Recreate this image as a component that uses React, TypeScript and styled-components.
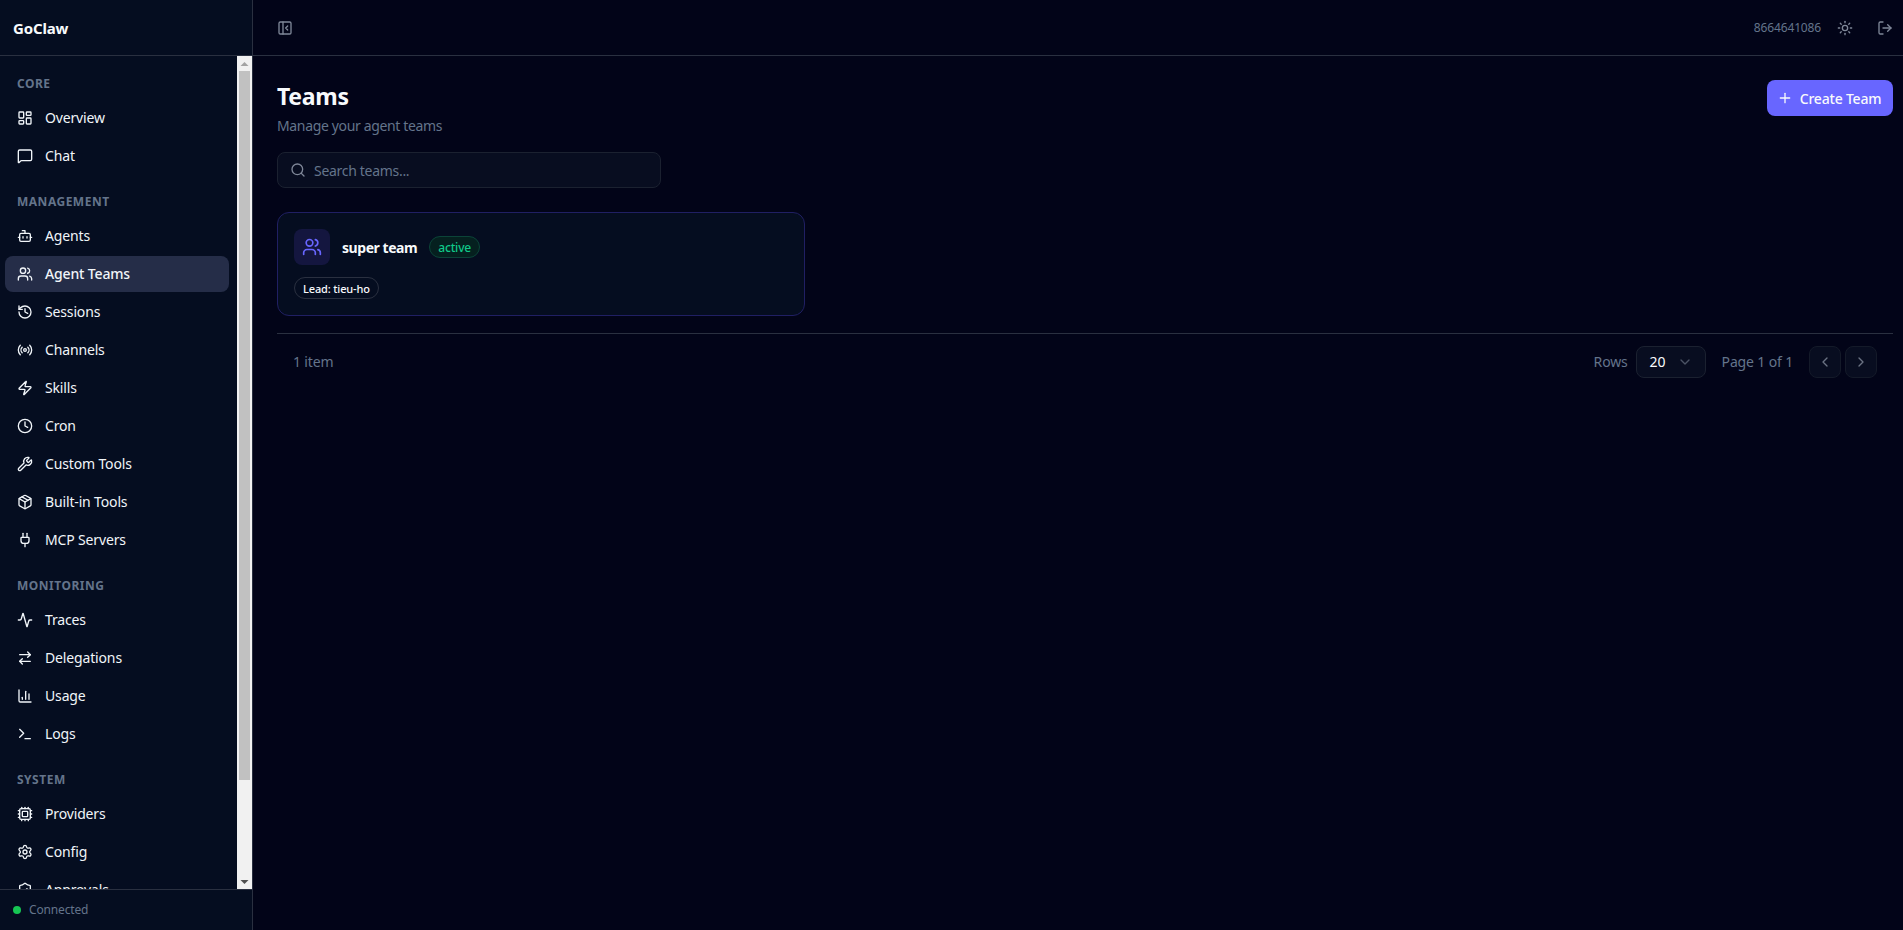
import styled, { createGlobalStyle } from "styled-components";
import {
  Activity,
  ArrowRightLeft,
  Bot,
  ChartColumn,
  ChevronDown,
  ChevronLeft,
  ChevronRight,
  Clock,
  Cpu,
  History,
  LayoutDashboard,
  LogOut,
  LucideIcon,
  MessageSquare,
  Package,
  PanelLeftClose,
  Plug,
  Plus,
  Radio,
  Search,
  Server,
  Settings,
  ShieldCheck,
  Sun,
  Terminal,
  Users,
  Volume2,
  Wrench,
  Zap,
} from "lucide-react";

const FONT = `"Noto Sans", "Open Sans", sans-serif`;

const navGroups: { title: string; items: { label: string; icon: LucideIcon; active?: boolean }[] }[] = [
  {
    title: "CORE",
    items: [
      { label: "Overview", icon: LayoutDashboard },
      { label: "Chat", icon: MessageSquare },
    ],
  },
  {
    title: "MANAGEMENT",
    items: [
      { label: "Agents", icon: Bot },
      { label: "Agent Teams", icon: Users, active: true },
      { label: "Sessions", icon: History },
      { label: "Channels", icon: Radio },
      { label: "Skills", icon: Zap },
      { label: "Cron", icon: Clock },
      { label: "Custom Tools", icon: Wrench },
      { label: "Built-in Tools", icon: Package },
      { label: "MCP Servers", icon: Plug },
    ],
  },
  {
    title: "MONITORING",
    items: [
      { label: "Traces", icon: Activity },
      { label: "Delegations", icon: ArrowRightLeft },
      { label: "Usage", icon: ChartColumn },
      { label: "Logs", icon: Terminal },
    ],
  },
  {
    title: "SYSTEM",
    items: [
      { label: "Providers", icon: Cpu },
      { label: "Config", icon: Settings },
      { label: "Approvals", icon: ShieldCheck },
      { label: "Nodes", icon: Server },
      { label: "TTS", icon: Volume2 },
    ],
  },
];

const GlobalStyle = createGlobalStyle`
  html, body {
    margin: 0;
    height: 100%;
    background: #020418;
    overflow: hidden;
  }
  * {
    box-sizing: border-box;
  }
`;

const Shell = styled.div`
  display: flex;
  height: 930px;
  font-family: ${FONT};
  letter-spacing: -0.15px;
  color: #f8fafc;
`;

const Sidebar = styled.aside`
  width: 253px;
  flex-shrink: 0;
  display: flex;
  flex-direction: column;
  background: #050d20;
  border-right: 1px solid #2a3040;
`;

const Brand = styled.div`
  height: 56px;
  flex-shrink: 0;
  display: flex;
  align-items: center;
  padding-left: 13px;
  font-size: 15px;
  font-weight: 700;
  border-bottom: 1px solid #2a3040;
`;

const NavArea = styled.div`
  flex: 1;
  min-height: 0;
  display: flex;
`;

const NavScroll = styled.nav`
  flex: 1;
  min-width: 0;
  overflow: hidden;
  padding: 16px 8px 15px 5px;
  display: flex;
  flex-direction: column;
  gap: 16px;
`;

const ScrollTrack = styled.div`
  width: 15px;
  flex-shrink: 0;
  display: flex;
  flex-direction: column;
  background: #f1f1f1;
`;

const ScrollArrow = styled.svg`
  width: 15px;
  height: 15px;
  flex-shrink: 0;
`;

const ScrollRail = styled.div`
  flex: 1;
  padding: 0 2px;
`;

const ScrollThumb = styled.div`
  height: 709px;
  background: #c1c1c1;
`;

const NavGroup = styled.div`
  display: flex;
  flex-direction: column;
  flex-shrink: 0;
`;

const GroupTitle = styled.div`
  height: 28px;
  padding-left: 12px;
  line-height: 24px;
  font-size: 12px;
  font-weight: 700;
  letter-spacing: 0.5px;
  color: #64748b;
`;

const NavList = styled.div`
  display: flex;
  flex-direction: column;
  gap: 2px;
`;

const NavItem = styled.a<{ $active?: boolean }>`
  height: 36px;
  flex-shrink: 0;
  display: flex;
  align-items: center;
  gap: 12px;
  padding-left: 12px;
  border-radius: 8px;
  font-size: 14px;
  font-weight: ${(props) => (props.$active ? 500 : 400)};
  color: #f1f5f9;
  background: ${(props) => (props.$active ? "#252d48" : "transparent")};

  svg {
    flex-shrink: 0;
  }
`;

const Label = styled.span`
  padding-bottom: 2px;
`;

const StatusBar = styled.div`
  height: 41px;
  flex-shrink: 0;
  display: flex;
  align-items: center;
  gap: 8px;
  padding-left: 13px;
  border-top: 1px solid #2a3040;
  font-size: 12px;
  color: #64748b;
`;

const StatusDot = styled.span`
  width: 8px;
  height: 8px;
  border-radius: 50%;
  background: #16c653;
`;

const Main = styled.div`
  flex: 1;
  min-width: 0;
  display: flex;
  flex-direction: column;
`;

const Topbar = styled.header`
  height: 56px;
  flex-shrink: 0;
  display: flex;
  align-items: center;
  justify-content: space-between;
  padding: 0 10px 0 24px;
  border-bottom: 1px solid #2a3040;
  color: #7f8798;
`;

const TopbarRight = styled.div`
  display: flex;
  align-items: center;
  gap: 16px;
`;

const AccountId = styled.span`
  font-size: 12px;
  color: #64748b;
`;

const LogoutIcon = styled(LogOut)`
  margin-left: 8px;
`;

const Content = styled.main`
  padding: 24px 10px 0 24px;
`;

const PageHeader = styled.div`
  display: flex;
  justify-content: space-between;
  align-items: flex-start;
`;

const Title = styled.h1`
  margin: 0;
  font-size: 23px;
  line-height: 32px;
  font-weight: 700;
  letter-spacing: -0.3px;
`;

const Subtitle = styled.p`
  margin: 4px 0 0;
  font-size: 14px;
  line-height: 20px;
  letter-spacing: -0.35px;
  color: #64748b;
`;

const PrimaryButton = styled.button`
  height: 36px;
  width: 126px;
  display: flex;
  align-items: center;
  justify-content: center;
  gap: 7px;
  padding: 0 8px 0 6px;
  border: 0;
  border-radius: 8px;
  background: #6866ff;
  color: #f8fafc;
  font-family: ${FONT};
  font-size: 14px;
  font-weight: 500;
  letter-spacing: -0.2px;
`;

const SearchBox = styled.label`
  width: 384px;
  height: 36px;
  margin-top: 16px;
  display: flex;
  align-items: center;
  gap: 8px;
  padding-left: 12px;
  border: 1px solid #1b2130;
  border-radius: 8px;
  background: #080d20;
  color: #7f8798;
`;

const SearchInput = styled.input`
  flex: 1;
  min-width: 0;
  padding: 0;
  border: 0;
  outline: 0;
  background: transparent;
  color: #f8fafc;
  font-family: ${FONT};
  font-size: 14px;
  letter-spacing: -0.3px;

  &::placeholder {
    color: #64748b;
    opacity: 1;
  }
`;

const CardGrid = styled.div`
  margin-top: 24px;
  display: grid;
  grid-template-columns: repeat(3, 1fr);
  gap: 16px;
`;

const TeamCard = styled.article`
  height: 104px;
  padding: 16px;
  border: 1px solid #201f63;
  border-radius: 12px;
  background: #050d20;
`;

const CardHead = styled.div`
  display: flex;
  align-items: center;
  gap: 12px;
`;

const TeamIcon = styled.div`
  width: 36px;
  height: 36px;
  display: flex;
  align-items: center;
  justify-content: center;
  border-radius: 8px;
  background: #14163f;
  color: #6866ff;
`;

const TeamName = styled.span`
  font-size: 14px;
  font-weight: 700;
  letter-spacing: -0.45px;
`;

const ActiveBadge = styled.span`
  height: 22px;
  padding: 0 8px;
  display: flex;
  align-items: center;
  border: 1px solid #0b4438;
  border-radius: 11px;
  background: #05201f;
  color: #10c98a;
  font-size: 12px;
  font-weight: 500;
`;

const LeadPill = styled.span`
  display: inline-flex;
  align-items: center;
  height: 22px;
  margin-top: 12px;
  padding: 0 8px;
  border: 1px solid #2a3040;
  border-radius: 11px;
  font-size: 11px;
  font-weight: 500;
`;

const Pagination = styled.div`
  margin-top: 17px;
  padding: 12px 16px;
  display: flex;
  justify-content: space-between;
  align-items: center;
  border-top: 1px solid #2a3040;
  font-size: 14px;
  color: #64748b;
`;

const PagerText = styled.span`
  height: 32px;
  display: flex;
  align-items: center;
  padding-bottom: 2px;
`;

const PagerControls = styled.div`
  display: flex;
  align-items: center;
`;

const RowsSelect = styled.div`
  width: 70px;
  height: 32px;
  margin: 0 16px 0 8px;
  padding: 0 12px 0 13px;
  display: flex;
  align-items: center;
  justify-content: space-between;
  border: 1px solid #1b2130;
  border-radius: 8px;
  background: #080d20;
  color: #f8fafc;

  svg {
    color: #4b5364;
  }
`;

const PagerButton = styled.button`
  width: 32px;
  height: 32px;
  padding: 0;
  display: flex;
  align-items: center;
  justify-content: center;
  border: 1px solid #141a29;
  border-radius: 8px;
  background: #080d20;
  color: #6b7383;
`;

const PagerButtons = styled.div`
  display: flex;
  gap: 4px;
  margin-left: 16px;
`;

export default function App() {
  return (
    <>
      <GlobalStyle />
      <Shell>
        <Sidebar>
          <Brand>GoClaw</Brand>
          <NavArea>
            <NavScroll>
              {navGroups.map((group) => (
                <NavGroup key={group.title}>
                  <GroupTitle>{group.title}</GroupTitle>
                  <NavList>
                    {group.items.map((item) => (
                      <NavItem key={item.label} $active={item.active}>
                        <item.icon size={16} strokeWidth={2} />
                        <Label>{item.label}</Label>
                      </NavItem>
                    ))}
                  </NavList>
                </NavGroup>
              ))}
            </NavScroll>
            <ScrollTrack>
              <ScrollArrow viewBox="0 0 15 15">
                <path d="M3.5 10h8L7.5 6z" fill="#a3a3a3" />
              </ScrollArrow>
              <ScrollRail>
                <ScrollThumb />
              </ScrollRail>
              <ScrollArrow viewBox="0 0 15 15">
                <path d="M3.5 6h8L7.5 10z" fill="#505050" />
              </ScrollArrow>
            </ScrollTrack>
          </NavArea>
          <StatusBar>
            <StatusDot />
            <Label>Connected</Label>
          </StatusBar>
        </Sidebar>
        <Main>
          <Topbar>
            <PanelLeftClose size={16} />
            <TopbarRight>
              <AccountId>8664641086</AccountId>
              <Sun size={16} />
              <LogoutIcon size={16} />
            </TopbarRight>
          </Topbar>
          <Content>
            <PageHeader>
              <div>
                <Title>Teams</Title>
                <Subtitle>Manage your agent teams</Subtitle>
              </div>
              <PrimaryButton>
                <Plus size={16} />
                Create Team
              </PrimaryButton>
            </PageHeader>
            <SearchBox>
              <Search size={16} />
              <SearchInput placeholder="Search teams..." />
            </SearchBox>
            <CardGrid>
              <TeamCard>
                <CardHead>
                  <TeamIcon>
                    <Users size={20} />
                  </TeamIcon>
                  <TeamName>super team</TeamName>
                  <ActiveBadge>active</ActiveBadge>
                </CardHead>
                <LeadPill>Lead: tieu-ho</LeadPill>
              </TeamCard>
            </CardGrid>
            <Pagination>
              <PagerText>1 item</PagerText>
              <PagerControls>
                <PagerText>Rows</PagerText>
                <RowsSelect>
                  <Label>20</Label>
                  <ChevronDown size={16} />
                </RowsSelect>
                <PagerText>Page 1 of 1</PagerText>
                <PagerButtons>
                  <PagerButton>
                    <ChevronLeft size={16} />
                  </PagerButton>
                  <PagerButton>
                    <ChevronRight size={16} />
                  </PagerButton>
                </PagerButtons>
              </PagerControls>
            </Pagination>
          </Content>
        </Main>
      </Shell>
    </>
  );
}
